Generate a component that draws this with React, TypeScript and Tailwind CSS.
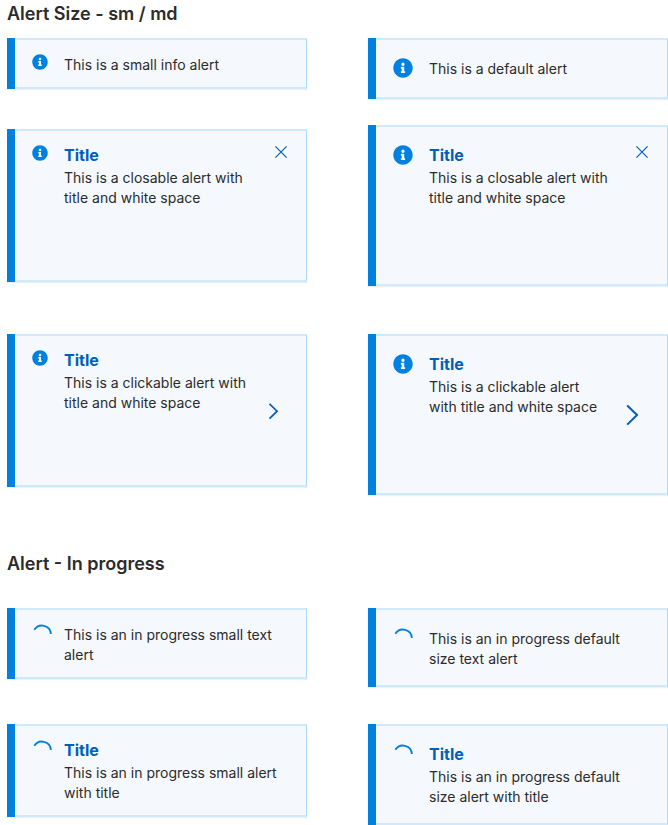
import type { ReactNode } from 'react';
import { FaInfoCircle } from 'react-icons/fa';

type Size = 'sm' | 'md';

type AlertProps = {
  size: Size;
  title?: string;
  closable?: boolean;
  clickable?: boolean;
  inProgress?: boolean;
  spacious?: boolean;
  children: ReactNode;
};

function Spinner() {
  return (
    <svg className="size-5 shrink-0" viewBox="0 0 20 20" fill="none" aria-label="In progress">
      <path d="M2.3 5.8A9 9 0 0 1 18.9 10" stroke="#0081e0" strokeWidth="1.8" />
    </svg>
  );
}

function Alert({ size, title, closable, clickable, inProgress, spacious, children }: AlertProps) {
  const small = size === 'sm';
  const padding = small ? 'pt-[14px] pb-[12px]' : 'pt-[18px] pb-[16px]';
  const height = spacious ? (small ? 'min-h-[153px]' : 'min-h-[161px]') : '';

  return (
    <div
      role="status"
      className={`flex border-l-8 border-l-[#0081e0] bg-[#f5f9fd] shadow-[0_1px_1px_rgba(0,60,110,0.08)] ${height}`}
    >
      <div
        className={`flex min-w-0 flex-1 items-start gap-4 border-y-2 border-r border-y-[#d0eafb] border-r-[#abdcfb] pr-[23px] pl-[17px] ${padding}`}
      >
        <div className={`flex shrink-0 ${small ? 'h-5 w-4' : 'h-[23px] w-5'}`}>
          {inProgress ? (
            <Spinner />
          ) : (
            <FaInfoCircle className={`text-[#0081e0] ${small ? 'size-4' : 'size-5'}`} />
          )}
        </div>
        <div className="min-w-0 flex-1 pt-px">
          {title && <h3 className="mb-1 text-[16px] leading-[18px] font-bold text-[#005fb8]">{title}</h3>}
          <p className="text-[14px] leading-[20px] text-[#2b2b2b]">{children}</p>
        </div>
        {closable && (
          <button type="button" aria-label="Close" className="-mr-2 flex h-[14px] w-5 items-center justify-center">
            <svg className="size-3" viewBox="0 0 12 12" fill="none" stroke="#005fb8" strokeWidth="1.2">
              <path d="M0.4 0.4l11.2 11.2M11.6 0.4l-11.2 11.2" />
            </svg>
          </button>
        )}
        {clickable && (
          <button
            type="button"
            aria-label="Open"
            className={`flex items-center justify-center self-center ${small ? 'size-5' : 'size-6'}`}
          >
            <svg
              className={small ? 'size-5' : 'size-6'}
              viewBox="0 0 20 20"
              fill="none"
              stroke="#005fb8"
              strokeWidth="1.7"
            >
              <path d={small ? 'M6.5 1.8l7.6 7.4-7.6 7.4' : 'M6 1.2l8.2 8-8.2 8'} />
            </svg>
          </button>
        )}
      </div>
    </div>
  );
}

function Row({ centered, children }: { centered?: boolean; children: ReactNode }) {
  return (
    <div className={`grid grid-cols-2 gap-[61px] ${centered ? 'items-center' : 'items-start'}`}>{children}</div>
  );
}

function Heading({ children }: { children: ReactNode }) {
  return <h2 className="text-[18px] leading-[28px] font-semibold text-[#2b2b2b]">{children}</h2>;
}

export default function App() {
  return (
    <main className="bg-white pl-[7px] font-['Inter','Liberation_Sans',sans-serif]">
      <section>
        <Heading>Alert Size - sm / md</Heading>
        <div className="mt-[10px]">
          <Row>
            <Alert size="sm">This is a small info alert</Alert>
            <Alert size="md">This is a default alert</Alert>
          </Row>
        </div>
        <div className="mt-[26px]">
          <Row centered>
            <Alert size="sm" title="Title" closable spacious>
              This is a closable alert with title and white space
            </Alert>
            <Alert size="md" title="Title" closable spacious>
              This is a closable alert with title and white space
            </Alert>
          </Row>
        </div>
        <div className="mt-[48px]">
          <Row>
            <Alert size="sm" title="Title" clickable spacious>
              This is a clickable alert with title and white space
            </Alert>
            <Alert size="md" title="Title" clickable spacious>
              This is a clickable alert with title and white space
            </Alert>
          </Row>
        </div>
      </section>
      <section className="mt-[55px]">
        <Heading>Alert - In progress</Heading>
        <div className="mt-[30px]">
          <Row>
            <Alert size="sm" inProgress>
              This is an in progress small text alert
            </Alert>
            <Alert size="md" inProgress>
              This is an in progress default size text alert
            </Alert>
          </Row>
        </div>
        <div className="mt-[37px]">
          <Row>
            <Alert size="sm" title="Title" inProgress>
              This is an in progress small alert with title
            </Alert>
            <Alert size="md" title="Title" inProgress>
              This is an in progress default size alert with title
            </Alert>
          </Row>
        </div>
      </section>
    </main>
  );
}
